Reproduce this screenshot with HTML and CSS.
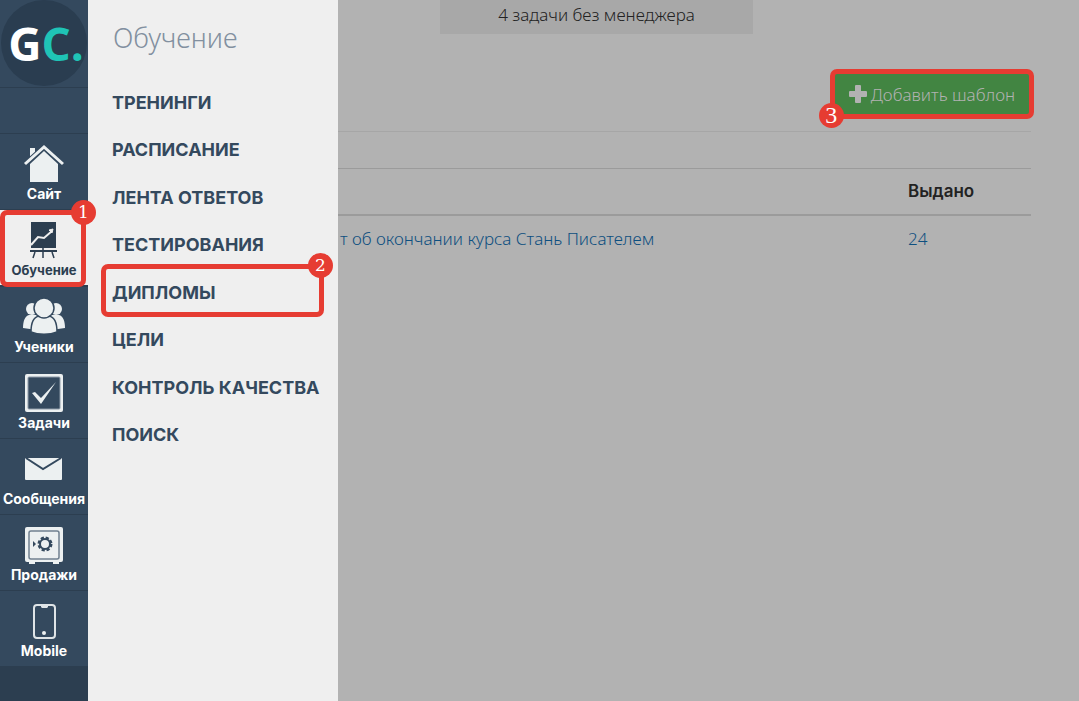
FILE: index.html
```html
<!DOCTYPE html>
<html lang="ru">
<head>
  <meta charset="UTF-8">
  <meta name="viewport" content="width=device-width, initial-scale=1.0">
  <title>Дипломы</title>
  <link rel="stylesheet" href="styles.css">
</head>
<body>
  <!-- Left bar with the main sections -->
  <nav class="sidebar">
    <a href="#" class="logo"><span class="logo-circle"><span>G<span class="logo-accent">C.</span></span></span></a>
    <div class="sidebar-gap"></div>
    <a href="#" class="nav-item">
      <svg width="42" height="40" viewBox="0 0 42 40" fill="#ecf0f1">
        <path d="M7 4h5v5l-5 5z"/>
        <path d="M21 7 35 20v18H7V20z"/>
        <path d="M2 20 21 3l19 17" fill="none" stroke="#34495e" stroke-width="5"/>
        <path d="M2 20 21 3l19 17" fill="none" stroke="#ecf0f1" stroke-width="3"/>
      </svg>
      <span>Сайт</span>
    </a>
    <a href="#" class="nav-item active">
      <svg width="42" height="40" viewBox="0 0 42 40" fill="none" stroke="#2c3e50">
        <path d="M8 2h25v26H8z" fill="#2c3e50" stroke="none"/>
        <path d="M7 31h27" stroke-width="2"/>
        <path d="M12 32l-2 6M20 28v10M29 32l2 6" stroke-width="1.5"/>
        <path d="M8 25l7-8 6 1 8-7" stroke="#efefef" stroke-width="2"/>
        <path d="M26 10l4-1-1 4z" fill="#efefef" stroke="#efefef"/>
      </svg>
      <span>Обучение</span>
      <b class="badge badge-1">1</b>
    </a>
    <a href="#" class="nav-item">
      <svg width="42" height="40" viewBox="0 0 42 40" fill="#ecf0f1">
        <circle cx="9" cy="12" r="6"/>
        <circle cx="33" cy="12" r="6"/>
        <path d="M0 31c0-7 2-12 6-13h8v15zM42 31c0-7-2-12-6-13h-8v15z"/>
        <g stroke="#34495e" stroke-width="1.5">
          <path d="M8 35c0-9 3-15 8-16h10c5 1 8 7 8 16-7 3-19 3-26 0z"/>
          <circle cx="21" cy="11" r="10"/>
        </g>
      </svg>
      <span>Ученики</span>
    </a>
    <a href="#" class="nav-item">
      <svg width="42" height="40" viewBox="0 0 42 40">
        <rect x="2" y="1" width="38" height="38" rx="2" fill="#ecf0f1"/>
        <rect x="5" y="4" width="32" height="32" rx="1" fill="#34495e" stroke="#8d9aa7"/>
        <path d="M9 20l3-1 6 6L33 9 18 31z" fill="#ecf0f1"/>
      </svg>
      <span>Задачи</span>
    </a>
    <a href="#" class="nav-item">
      <svg width="42" height="40" viewBox="0 0 42 40">
        <rect x="2" y="9" width="37" height="22" rx="1" fill="#ecf0f1"/>
        <path d="M3 9l17 11L38 9" fill="none" stroke="#34495e" stroke-width="2"/>
      </svg>
      <span>Сообщения</span>
    </a>
    <a href="#" class="nav-item">
      <svg width="42" height="40" viewBox="0 0 42 40" fill="none">
        <rect x="2" y="2" width="38" height="35" rx="2" fill="#ecf0f1"/>
        <path d="M6 36h6v3H6zM30 36h6v3h-6z" fill="#ecf0f1"/>
        <rect x="6" y="6" width="30" height="28" rx="2" stroke="#708090" stroke-width="1.5"/>
        <circle cx="22" cy="19" r="5" stroke="#34495e" stroke-width="2"/>
        <circle cx="22" cy="19" r="6" stroke="#34495e" stroke-width="3" stroke-dasharray="3 1.7"/>
        <path d="M10 16l3 3-3 3z" fill="#34495e"/>
      </svg>
      <span>Продажи</span>
    </a>
    <a href="#" class="nav-item">
      <svg width="42" height="40" viewBox="0 0 42 40">
        <rect x="11" y="4" width="21" height="33" rx="3" fill="none" stroke="#dfe4e7" stroke-width="2"/>
        <path d="M18 4h7v2l-1 1h-5l-1-1z" fill="#dfe4e7"/>
        <circle cx="21" cy="32" r="2" fill="#ecf0f1"/>
      </svg>
      <span>Mobile</span>
    </a>
  </nav>

  <!-- Section menu -->
  <aside class="menu">
    <h2>Обучение</h2>
    <ul>
      <li><a href="#">ТРЕНИНГИ</a></li>
      <li><a href="#">РАСПИСАНИЕ</a></li>
      <li><a href="#">ЛЕНТА ОТВЕТОВ</a></li>
      <li><a href="#">ТЕСТИРОВАНИЯ</a></li>
      <li class="marked"><a href="#">ДИПЛОМЫ</a><b class="badge badge-2">2</b></li>
      <li><a href="#">ЦЕЛИ</a></li>
      <li><a href="#">КОНТРОЛЬ КАЧЕСТВА</a></li>
      <li><a href="#">ПОИСК</a></li>
    </ul>
  </aside>

  <main class="content">
    <div class="notice">4 задачи без менеджера</div>
    <div class="toolbar">
      <div class="add-wrap">
        <button type="button" class="add-btn">
          <svg width="18" height="18" viewBox="0 0 18 18"><path d="M7 0h4q1 0 1 1v5h5q1 0 1 1v4q0 1-1 1h-5v5q0 1-1 1H7q-1 0-1-1v-5H1q-1 0-1-1V7q0-1 1-1h5V1q0-1 1-1z" fill="#b2b2b2"/></svg>
          Добавить шаблон
        </button>
        <b class="badge badge-3">3</b>
      </div>
    </div>
    <table class="templates">
      <thead>
        <tr><th></th><th class="col-count">Выдано</th></tr>
      </thead>
      <tbody>
        <tr>
          <td><a href="#">т об окончании курса Стань Писателем</a></td>
          <td><a href="#">24</a></td>
        </tr>
      </tbody>
    </table>
  </main>
</body>
</html>
```
FILE: styles.css
```css
* {
  box-sizing: border-box;
}
body {
  margin: 0;
  min-height: 100vh;
  display: flex;
  background: #b2b2b2;
  font-family: "Noto Sans", "Open Sans", sans-serif;
  font-size: 17px;
  font-weight: 300;
  color: #222;
}
a {
  text-decoration: none;
}

/* Sidebar */
.sidebar {
  width: 88px;
  flex-shrink: 0;
  background: #2c3e50;
}
.logo {
  display: block;
  height: 88px;
  background: #34495e;
  border-bottom: 1px solid #2c3e50;
}
.logo-circle {
  width: 86px;
  height: 86px;
  margin: 0 auto;
  display: flex;
  align-items: center;
  justify-content: center;
  padding-left: 4px;
  border-radius: 50%;
  background: #2a3d50;
  color: #fff;
  font-family: "Open Sans", sans-serif;
  font-size: 46px;
  font-weight: 700;
  line-height: 84px;
}
.logo-accent {
  color: #1fc4b6;
}
.sidebar-gap {
  height: 46px;
  background: #34495e;
  border-bottom: 1px solid #2c3e50;
}
.nav-item {
  position: relative;
  display: flex;
  flex-direction: column;
  align-items: center;
  height: 76px;
  padding-top: 10px;
  background: #34495e;
  border-bottom: 1px solid #2c3e50;
  color: #fff;
  font-family: Inter, sans-serif;
  font-size: 14px;
  font-weight: 700;
  line-height: 20px;
}
.nav-item.active {
  margin-bottom: 1px;
  background: #efefef;
  color: #2c3e50;
  font-size: 13px;
}

/* Red frames with step numbers */
.nav-item.active::after,
.marked::after,
.add-wrap::after {
  content: "";
  position: absolute;
  border: 5px solid #e63c32;
  border-radius: 7px;
  pointer-events: none;
}
.nav-item.active::after {
  inset: 0 2px -2px 0;
  z-index: 1;
}
.marked::after {
  inset: -4px 14px -1px 13px;
}
.add-wrap::after {
  inset: -5px;
}
.badge {
  position: absolute;
  z-index: 2;
  width: 25px;
  height: 25px;
  border-radius: 50%;
  background: #e63c32;
  color: #fff;
  font-family: "DejaVu Serif", serif;
  font-size: 17px;
  font-weight: 400;
  line-height: 25px;
  text-align: center;
}
.badge-1 {
  top: -10px;
  right: -8px;
}
.badge-2 {
  top: -15px;
  right: 5px;
}
.badge-3 {
  left: -16px;
  bottom: -14px;
  font-family: "Liberation Serif", serif;
  font-size: 24px;
}

/* Section menu */
.menu {
  width: 250px;
  flex-shrink: 0;
  padding-top: 18px;
  background: #efefef;
}
.menu h2 {
  margin: 0 0 20px;
  padding-left: 25px;
  color: #8290a0;
  font-size: 27px;
  font-weight: 300;
  line-height: 40px;
}
.menu ul {
  display: grid;
  grid-template-rows: repeat(4, 48px 47px);
  margin: 0;
  padding: 0;
  list-style: none;
}
.menu li {
  position: relative;
  display: flex;
  align-items: center;
  padding-left: 24px;
}
.menu li a {
  color: #34495e;
  font-family: Inter, sans-serif;
  font-size: 18px;
  font-weight: 650;
}

/* Main part */
.content {
  flex: 1;
  padding-right: 48px;
}
.notice {
  width: 313px;
  margin-left: 102px;
  padding: 3px 0 7px;
  background: #a8a8a8;
  line-height: 24px;
  text-align: center;
}
.toolbar {
  display: flex;
  justify-content: flex-end;
  padding: 40px 2px 17px 0;
  border-bottom: 1px solid #a6a6a6;
}
.add-wrap {
  position: relative;
}
.add-btn {
  display: flex;
  align-items: center;
  gap: 4px;
  height: 40px;
  padding: 0 14px;
  border: 0;
  background: #428542;
  color: #b2b2b2;
  font: inherit;
  cursor: pointer;
}
.templates {
  width: 100%;
  margin-top: 36px;
  border-collapse: separate;
  border-spacing: 0;
}
.templates th,
.templates td {
  height: 44px;
  padding: 0;
  text-align: left;
}
.templates th {
  height: 48px;
  padding-bottom: 2px;
  border-top: 1px solid #9b9b9b;
  border-bottom: 2px solid #9b9b9b;
  font-family: Inter, sans-serif;
  font-size: 17px;
  font-weight: 600;
}
.templates td:first-child {
  padding-left: 2px;
}
.col-count {
  width: 123px;
}
.templates a {
  color: #0d4f80;
}
```
